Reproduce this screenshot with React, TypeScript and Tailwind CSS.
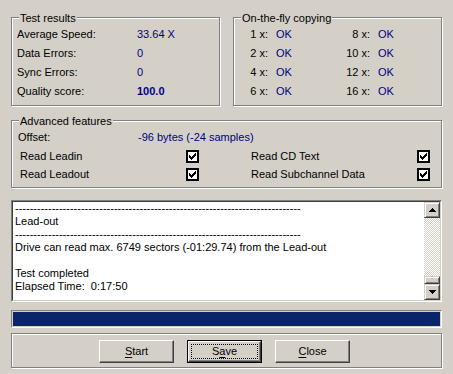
import React from "react";

const DASHES = "-".repeat(78);

function GroupBox({
  title,
  className = "",
  children,
}: {
  title?: string;
  className?: string;
  children?: React.ReactNode;
}) {
  return (
    <div
      className={`relative border border-[#808080] shadow-[1px_1px_0_#ffffff,inset_1px_1px_0_#ffffff] ${className}`}
    >
      {title && (
        <span className="absolute -top-[6px] left-[7px] px-[1px] bg-[#d4d0c8] leading-[13px]">
          {title}
        </span>
      )}
      {children}
    </div>
  );
}

function Check() {
  const starts = [2, 3, 4, 3, 2, 1, 0];
  return (
    <span className="w-[13px] h-[13px] border-2 border-black bg-white flex items-center justify-center">
      <svg width="7" height="7" viewBox="0 0 7 7" shapeRendering="crispEdges">
        {starts.map((y, x) => (
          <rect key={x} x={x} y={y} width="1" height="3" fill="#000" />
        ))}
      </svg>
    </span>
  );
}

function Arrow({ up }: { up?: boolean }) {
  const rows = [1, 3, 5, 7];
  return (
    <svg width="7" height="4" viewBox="0 0 7 4" shapeRendering="crispEdges">
      {rows.map((w, i) => (
        <rect key={i} x={(7 - w) / 2} y={up ? i : 3 - i} width={w} height="1" fill="#000" />
      ))}
    </svg>
  );
}

function ScrollButton({ up }: { up?: boolean }) {
  return (
    <div className="h-[16px] w-[16px] bg-[#d4d0c8] border border-t-[#d4d0c8] border-l-[#d4d0c8] border-b-[#404040] border-r-[#404040] shadow-[inset_1px_1px_0_#ffffff,inset_-1px_-1px_0_#808080] flex items-center justify-center">
      <Arrow up={up} />
    </div>
  );
}

function Button({
  label,
  mnemonic,
  isDefault,
}: {
  label: string;
  mnemonic: number;
  isDefault?: boolean;
}) {
  const text = (
    <span>
      {label.slice(0, mnemonic)}
      <span className="underline underline-offset-2">{label[mnemonic]}</span>
      {label.slice(mnemonic + 1)}
    </span>
  );
  if (isDefault) {
    return (
      <div className="w-[75px] h-[23px] border border-black">
        <div className="h-full w-full border border-t-white border-l-white border-b-[#404040] border-r-[#404040] shadow-[inset_-1px_-1px_0_#808080] flex items-center justify-center p-[2px]">
          <div className="h-full w-full border border-dotted border-black flex items-center justify-center">
            {text}
          </div>
        </div>
      </div>
    );
  }
  return (
    <div className="w-[75px] h-[23px] border border-t-white border-l-white border-b-[#404040] border-r-[#404040] shadow-[inset_-1px_-1px_0_#808080] flex items-center justify-center">
      {text}
    </div>
  );
}

export default function App() {
  const results = [
    { label: "Average Speed:", value: "33.64 X" },
    { label: "Data Errors:", value: "0" },
    { label: "Sync Errors:", value: "0" },
    { label: "Quality score:", value: "100.0", bold: true },
  ];
  const copying = [
    ["1 x:", "8 x:"],
    ["2 x:", "10 x:"],
    ["4 x:", "12 x:"],
    ["6 x:", "16 x:"],
  ];

  return (
    <div className="w-[453px] h-[374px] bg-[#d4d0c8] px-[11px] pt-[17px] font-['Liberation_Sans',Arial,sans-serif] text-[11px] text-black overflow-hidden">
      {/* top row */}
      <div className="flex gap-[13px]">
        <GroupBox title="Test results" className="w-[209px] h-[89px]">
          <div className="pt-[7px] pl-[5px]">
            {results.map((r) => (
              <div key={r.label} className="flex h-[19px] items-center">
                <span className="w-[120px]">{r.label}</span>
                <span className={`text-[#000080] ${r.bold ? "font-bold" : ""}`}>{r.value}</span>
              </div>
            ))}
          </div>
        </GroupBox>
        <GroupBox title="On-the-fly copying" className="w-[209px] h-[89px]">
          <div className="pt-[7px]">
            {copying.map(([a, b]) => (
              <div key={a} className="flex h-[19px] items-center">
                <span className="w-[34px] text-right">{a}</span>
                <span className="ml-[8px] w-[60px] text-[#000080]">OK</span>
                <span className="w-[34px] text-right">{b}</span>
                <span className="ml-[8px] text-[#000080]">OK</span>
              </div>
            ))}
          </div>
        </GroupBox>
      </div>

      {/* advanced features */}
      <GroupBox title="Advanced features" className="mt-[14px] h-[68px]">
        <div className="pt-[8px]">
          <div className="flex h-[16px] items-center pl-[6px]">
            <span className="w-[120px]">Offset:</span>
            <span className="text-[#000080]">-96 bytes (-24 samples)</span>
          </div>
          <div className="mt-[2px] pl-[8px]">
            <div className="flex h-[18px] items-center">
              <span className="w-[166px]">Read Leadin</span>
              <Check />
              <span className="ml-[52px] w-[166px]">Read CD Text</span>
              <Check />
            </div>
            <div className="flex h-[18px] items-center">
              <span className="w-[166px]">Read Leadout</span>
              <Check />
              <span className="ml-[52px] w-[166px]">Read Subchannel Data</span>
              <Check />
            </div>
          </div>
        </div>
      </GroupBox>

      {/* log */}
      <div className="mt-[12px] h-[102px] border border-t-[#808080] border-l-[#808080] border-b-white border-r-white">
        <div className="h-full border border-t-[#404040] border-l-[#404040] border-b-[#d4d0c8] border-r-[#d4d0c8] bg-white flex">
          <div className="flex-1 pl-[2px] leading-[13px] whitespace-pre overflow-hidden">
            <div>{DASHES}</div>
            <div>Lead-out</div>
            <div>{DASHES}</div>
            <div>Drive can read max. 6749 sectors (-01:29.74) from the Lead-out</div>
            <div>&nbsp;</div>
            <div>Test completed</div>
            <div>Elapsed Time:  0:17:50</div>
          </div>
          <div className="w-[16px] flex flex-col">
            <ScrollButton up />
            <div className="flex-1 bg-[repeating-conic-gradient(#d4d0c8_0%_25%,#ffffff_0%_50%)] bg-[length:2px_2px]" />
            <div className="h-[8px] bg-[#d4d0c8] border border-t-[#d4d0c8] border-l-[#d4d0c8] border-b-[#404040] border-r-[#404040] shadow-[inset_1px_1px_0_#ffffff,inset_-1px_-1px_0_#808080]" />
            <ScrollButton />
          </div>
        </div>
      </div>

      {/* progress */}
      <div className="mt-[8px] h-[18px] border border-t-[#808080] border-l-[#808080] border-b-white border-r-white p-[1px]">
        <div className="h-full bg-[#0a246a]" />
      </div>

      {/* buttons */}
      <GroupBox className="mt-[5px] h-[35px]">
        <div className="flex pt-[6px] pl-[87px] gap-[13px]">
          <Button label="Start" mnemonic={0} />
          <Button label="Save" mnemonic={1} isDefault />
          <Button label="Close" mnemonic={0} />
        </div>
      </GroupBox>
    </div>
  );
}
